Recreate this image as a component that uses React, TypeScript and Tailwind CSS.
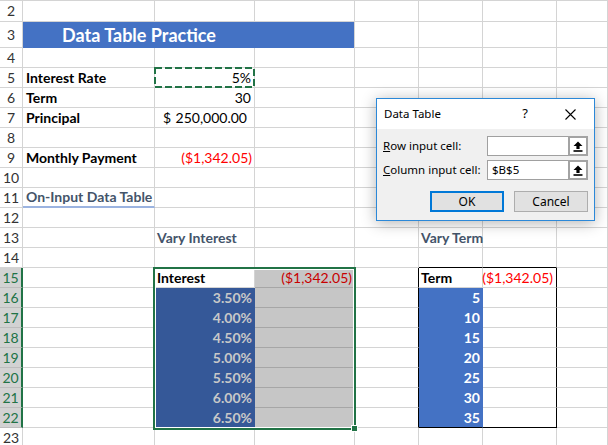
import React from 'react';
import clsx from 'clsx';

type Spec = { v?: React.ReactNode; c?: string; r?: string; b?: string };

const COLS = ['A', 'B', 'C', 'D', 'E', 'F', 'G'];
const GRID_R = 'border-r border-r-[#d4d4d4]';
const GRID_B = 'border-b border-b-[#d4d4d4]';
const BLACK_R = 'border-r border-r-black';
const BLACK_B = 'border-b border-b-black';

const RATES = ['3.50%', '4.00%', '4.50%', '5.00%', '5.50%', '6.00%', '6.50%'];
const TERMS = ['5', '10', '15', '20', '25', '30', '35'];

const cells: Record<string, Spec> = {
    A5: { v: 'Interest Rate', c: 'font-bold pl-[3px]' },
    B5: { v: '5%', c: 'justify-end pr-[3px]' },
    A6: { v: 'Term', c: 'font-bold pl-[3px]' },
    B6: { v: '30', c: 'justify-end pr-[3px]' },
    A7: { v: 'Principal', c: 'font-bold pl-[3px]' },
    B7: {
        v: (
            <>
                <span>$</span>
                <span>250,000.00</span>
            </>
        ),
        c: 'justify-between pl-[8px] pr-[7px]',
    },
    A9: { v: 'Monthly Payment', c: 'font-bold pl-[3px]' },
    B9: { v: '($1,342.05)', c: 'justify-end pr-[2px] text-[#ff0000]' },
    A11: { v: 'On-Input Data Table', c: 'font-bold pl-[3px] text-[#44546a]', b: 'border-b-2 border-b-[#9bb3e0]' },
    B13: { v: 'Vary Interest', c: 'font-bold pl-[2px] text-[#44546a]' },
    E13: { v: 'Vary Term', c: 'font-bold pl-[2px] text-[#44546a]' },
    E14: { b: BLACK_B },
    F14: { b: BLACK_B },
    B15: { v: 'Interest', c: 'font-bold pl-[2px]' },
    C15: { v: '($1,342.05)', c: 'justify-end pr-[2px] bg-[#c6c6c6] text-[#c80000]', b: 'border-b border-b-[#a6a6a6]' },
    D15: { r: BLACK_R },
    E15: { v: 'Term', c: 'font-bold pl-[2px]' },
    F15: { v: '($1,342.05)', c: 'justify-end pr-[3px] text-[#ff0000]', r: BLACK_R },
};

RATES.forEach((rate, i) => {
    const n = 16 + i;
    const last = n === 22;
    cells[`B${n}`] = {
        v: rate,
        c: 'justify-end pr-[2px] font-bold bg-[#355898] text-[#c8c8c8]',
        r: 'border-r border-r-[#355898]',
        b: 'border-b border-b-[#355898]',
    };
    cells[`C${n}`] = { c: 'bg-[#c6c6c6]', b: 'border-b border-b-[#a6a6a6]' };
    cells[`D${n}`] = { r: BLACK_R };
    cells[`E${n}`] = {
        v: TERMS[i],
        c: 'justify-end pr-[2px] font-bold bg-[#4472c4] text-white',
        r: 'border-r border-r-[#4472c4]',
        b: last ? BLACK_B : 'border-b border-b-[#4472c4]',
    };
    cells[`F${n}`] = { r: BLACK_R, b: last ? BLACK_B : undefined };
});

function Cell({ spec }: { spec?: Spec }) {
    return (
        <div
            className={clsx(
                'flex items-center whitespace-nowrap overflow-visible text-[14px] leading-none',
                spec?.r ?? GRID_R,
                spec?.b ?? GRID_B,
                spec?.c
            )}
        >
            {spec?.v}
        </div>
    );
}

function RowHeader({ n }: { n: number }) {
    const selected = n >= 15 && n <= 22;
    return (
        <div
            className={clsx(
                'flex items-center justify-center text-[14px] leading-none border-b',
                selected
                    ? 'bg-[#d2d2d2] text-[#217346] border-r-2 border-r-[#217346] border-b-[#bdbdbd]'
                    : 'bg-white text-[#333] border-r border-r-[#d4d4d4] border-b-[#d4d4d4]'
            )}
        >
            {n}
        </div>
    );
}

function UploadArrow() {
    return (
        <svg width="10" height="11" viewBox="0 0 10 11">
            <path d="M5 0.5 L9.5 5 H6.6 V8 H3.4 V5 H0.5 Z" fill="#000" />
            <rect x="0.5" y="9.2" width="9" height="1.6" fill="#000" />
        </svg>
    );
}

function RefField({ value }: { value?: string }) {
    return (
        <div className="flex h-[20px]">
            <div className="w-[81px] h-full bg-white border border-r-0 border-[#a0a0a0] flex items-center pl-[4px] text-[11.5px]">
                {value}
            </div>
            <div className="w-[20px] h-full bg-white border-2 border-[#a3a3a3] flex items-center justify-center">
                <UploadArrow />
            </div>
        </div>
    );
}

function DataTableDialog() {
    return (
        <div className="absolute left-[376px] top-[97px] w-[219px] h-[123px] flex flex-col bg-white border border-[#2b88d8] shadow-[0_2px_14px_rgba(0,0,0,0.3)] font-['Noto_Sans',sans-serif] text-black">
            <div className="h-[30px] flex items-center pl-[7px] text-[11.5px]">
                <span>Data Table</span>
                <span className="ml-auto mr-[37px] text-[13px]">?</span>
                <svg className="mr-[18px]" width="11" height="11" viewBox="0 0 11 11">
                    <path d="M0.5 0.5 L10.5 10.5 M10.5 0.5 L0.5 10.5" stroke="#000" strokeWidth="1.1" />
                </svg>
            </div>
            <div className="flex-1 bg-[#f0f0f0] pt-[7px] pl-[6px] pr-[6px] flex flex-col text-[11.5px]">
                <div className="flex items-center justify-between">
                    <span>
                        <span className="underline">R</span>ow input cell:
                    </span>
                    <RefField />
                </div>
                <div className="flex items-center justify-between mt-[4px]">
                    <span>
                        <span className="underline">C</span>olumn input cell:
                    </span>
                    <RefField value="$B$5" />
                </div>
                <div className="flex justify-end gap-[10px] mt-[11px] text-[12px]">
                    <button className="w-[74px] h-[21px] bg-[#e1e1e1] border-2 border-[#0078d7] flex items-center justify-center">
                        OK
                    </button>
                    <button className="w-[74px] h-[21px] bg-[#e1e1e1] border border-[#adadad] flex items-center justify-center">
                        Cancel
                    </button>
                </div>
            </div>
        </div>
    );
}

export default function App() {
    const rows = Array.from({ length: 22 }, (_, i) => i + 2);

    return (
        <div className="relative w-[608px] h-[445px] overflow-hidden bg-white text-black border-t border-t-[#d4d4d4] font-[Lato,sans-serif]">
            <div className="grid grid-cols-[23px_132px_100px_100px_64px_64px_74px_1fr] grid-rows-[21px_26px_repeat(20,20px)]">
                {rows.map(n => (
                    <React.Fragment key={n}>
                        <RowHeader n={n} />
                        {n === 3 ? (
                            <>
                                <div className="col-span-3 flex items-center bg-[#4472c4] border-r border-r-[#d4d4d4]">
                                    <div className="w-[232px] text-center text-white font-bold text-[18px] leading-none">
                                        Data Table Practice
                                    </div>
                                </div>
                                {COLS.slice(3).map(col => (
                                    <Cell key={col} spec={cells[`${col}${n}`]} />
                                ))}
                            </>
                        ) : (
                            COLS.map(col => <Cell key={col} spec={cells[`${col}${n}`]} />)
                        )}
                    </React.Fragment>
                ))}
            </div>

            {/* copy marquee around B5 */}
            <svg className="absolute left-[154px] top-[66px]" width="101" height="21">
                <rect x="1" y="1" width="99" height="19" fill="none" stroke="#217346" strokeWidth="2" strokeDasharray="7 3" />
            </svg>

            {/* selection B15:C22 */}
            <div className="absolute left-[153px] top-[266px] w-[203px] h-[163px] border-2 border-[#217346]">
                <div className="absolute inset-0 border border-white" />
            </div>
            <div className="absolute left-[351px] top-[424px] w-[7px] h-[7px] bg-[#217346] border border-white" />

            <DataTableDialog />
        </div>
    );
}
